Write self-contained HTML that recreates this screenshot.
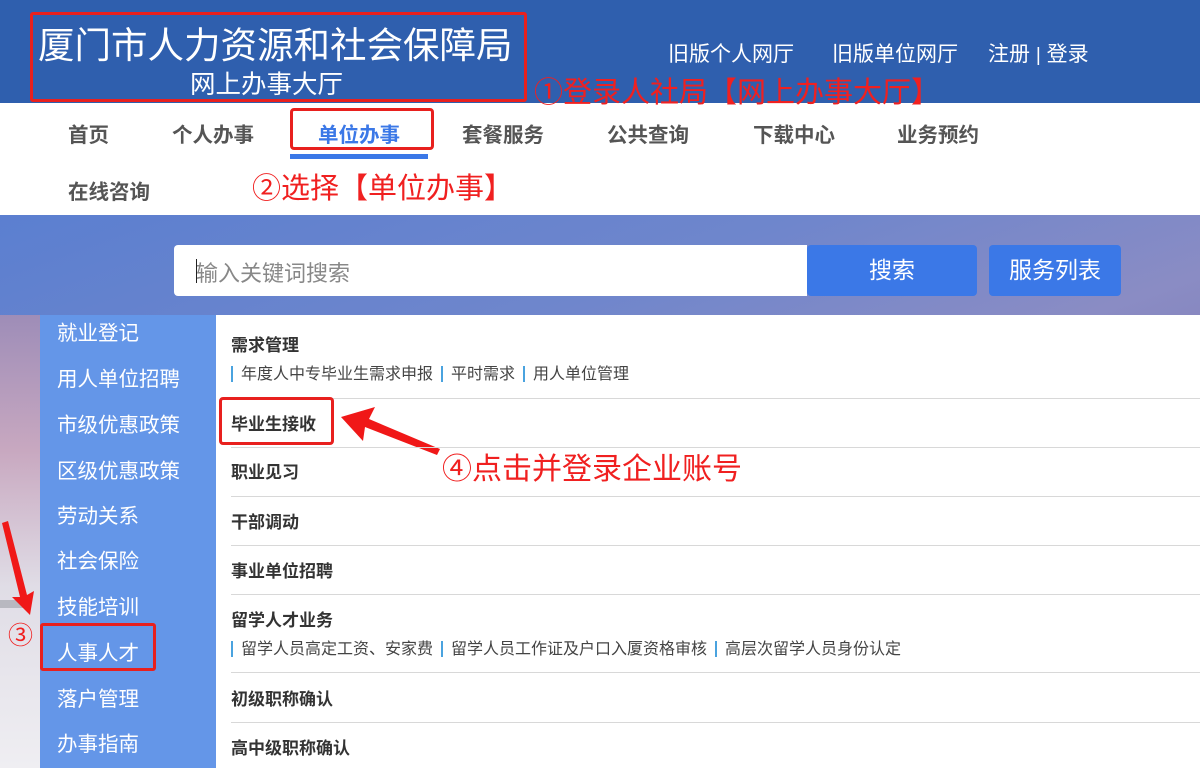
<!DOCTYPE html>
<html><head><meta charset="utf-8"><style>
*{margin:0;padding:0;box-sizing:border-box}
body{width:1200px;height:768px;overflow:hidden;position:relative;font-family:"Liberation Sans","Noto Sans CJK SC",sans-serif;background:#fff}
.a{position:absolute;white-space:nowrap}
.hdr{left:0;top:0;width:1200px;height:103px;background:#2f5fae}
.nav{font-size:20.5px;font-weight:bold;color:#555}
.side{left:40px;top:315px;width:176px;height:453px;background:#6496e8}
.si{left:57px;font-size:20.5px;color:#fff}
.t{left:231px;font-size:17px;font-weight:bold;color:#333}
.s{left:231px;font-size:16px;color:#444}
.s b{display:inline-block;width:2px;height:16px;background:#4aa3df;vertical-align:-3px;margin:0 8px 0 0}
.s i{display:inline-block;width:2px;height:16px;background:#4aa3df;vertical-align:-3px;margin:0 8px}
.ln{left:231px;width:969px;height:1px;background:#d8d8d8}
.red{color:#f02020}
</style></head><body>
<div class="a hdr"></div>
<div class="a" style="left:30px;top:12px;width:497px;height:90px;border:3px solid #e8201e;border-radius:3px"></div>
<div class="a" style="left:38px;top:16px;font-size:36.5px;color:#fff">厦门市人力资源和社会保障局</div>
<div class="a" style="left:190px;top:64px;font-size:25.5px;color:#fff">网上办事大厅</div>
<div class="a" style="left:668px;top:38px;font-size:21px;color:#fff">旧版个人网厅</div>
<div class="a" style="left:832px;top:38px;font-size:21px;color:#fff">旧版单位网厅</div>
<div class="a" style="left:988px;top:38px;font-size:21px;color:#fff">注册 <span style="font-size:19px">|</span> 登录</div>
<div class="a red" style="left:534px;top:69px;font-size:29px">①登录人社局【网上办事大厅】</div>
<div class="a nav" style="left:68px;top:118px">首页</div>
<div class="a nav" style="left:172px;top:118px">个人办事</div>
<div class="a nav" style="left:318px;top:118px;color:#3b78e7">单位办事</div>
<div class="a" style="left:290px;top:108px;width:144px;height:42px;border:3px solid #e8201e;border-radius:4px"></div>
<div class="a" style="left:290px;top:154px;width:138px;height:5px;background:#3b78e7"></div>
<div class="a nav" style="left:462px;top:118px">套餐服务</div>
<div class="a nav" style="left:607px;top:118px">公共查询</div>
<div class="a nav" style="left:753px;top:118px">下载中心</div>
<div class="a nav" style="left:897px;top:118px">业务预约</div>
<div class="a nav" style="left:68px;top:175px">在线咨询</div>
<div class="a red" style="left:252px;top:165px;font-size:29px">②选择【单位办事】</div>
<div class="a" style="left:0;top:215px;width:1200px;height:553px;background:linear-gradient(160deg,#5b7fd0 0%,#6f86cc 30%,#8a8cc4 50%,#6c5e9a 100%)"></div>
<div class="a" style="left:0;top:315px;width:40px;height:453px;background:linear-gradient(180deg,#9e8db8 0%,#c8a8c0 30%,#e0dde6 60%,#efeef2 100%)"></div>
<div class="a" style="left:0;top:600px;width:30px;height:8px;background:#b8b8c0"></div>
<div class="a" style="left:174px;top:245px;width:633px;height:51px;background:#fff;border-radius:4px 0 0 4px"></div>
<div class="a" style="left:196px;top:256px;font-size:22px;color:#888">输入关键词搜索</div>
<div class="a" style="left:196px;top:259px;width:1px;height:24px;background:#222"></div>
<div class="a" style="left:807px;top:245px;width:170px;height:51px;background:#3b78e7;border-radius:4px;color:#fff;font-size:23px;text-align:center;line-height:51px">搜索</div>
<div class="a" style="left:989px;top:245px;width:132px;height:51px;background:#3b78e7;border-radius:4px;color:#fff;font-size:23px;text-align:center;line-height:51px">服务列表</div>
<div class="a side"></div>
<div class="a" style="left:216px;top:315px;width:984px;height:453px;background:#fff"></div>
<div class="a si" style="top:316px">就业登记</div>
<div class="a si" style="top:362px">用人单位招聘</div>
<div class="a si" style="top:408px">市级优惠政策</div>
<div class="a si" style="top:454px">区级优惠政策</div>
<div class="a si" style="top:499px">劳动关系</div>
<div class="a si" style="top:544px">社会保险</div>
<div class="a si" style="top:590px">技能培训</div>
<div class="a si" style="top:636px">人事人才</div>
<div class="a si" style="top:682px">落户管理</div>
<div class="a si" style="top:727px">办事指南</div>
<div class="a" style="left:40px;top:623px;width:116px;height:48px;border:3px solid #e8201e;border-radius:3px"></div>
<div class="a red" style="left:8px;top:616px;font-size:25px">③</div>
<svg class="a" style="left:0;top:515px" width="40" height="100"><polygon points="2,8 8,6 27,80 34,76 30,100 12,82 20,82" fill="#f01818"/></svg>
<div class="a t" style="top:331px">需求管理</div>
<div class="a s" style="top:360px"><b></b>年度人中专毕业生需求申报<i></i>平时需求<i></i>用人单位管理</div>
<div class="a ln" style="top:398px"></div>
<div class="a t" style="top:410px">毕业生接收</div>
<div class="a" style="left:219px;top:397px;width:115px;height:48px;border:3px solid #e8201e;border-radius:4px"></div>
<svg class="a" style="left:335px;top:405px" width="110" height="60"><polygon points="6,12 40,2 34,14 105,44 102,50 30,22 28,36" fill="#f01818"/></svg>
<div class="a red" style="left:442px;top:444px;font-size:30px">④点击并登录企业账号</div>
<div class="a ln" style="top:447px"></div>
<div class="a t" style="top:458px">职业见习</div>
<div class="a ln" style="top:496px"></div>
<div class="a t" style="top:508px">干部调动</div>
<div class="a ln" style="top:545px"></div>
<div class="a t" style="top:557px">事业单位招聘</div>
<div class="a ln" style="top:594px"></div>
<div class="a t" style="top:606px">留学人才业务</div>
<div class="a s" style="top:635px"><b></b>留学人员高定工资、安家费<i></i>留学人员工作证及户口入厦资格审核<i></i>高层次留学人员身份认定</div>
<div class="a ln" style="top:672px"></div>
<div class="a t" style="top:685px">初级职称确认</div>
<div class="a ln" style="top:722px"></div>
<div class="a t" style="top:734px">高中级职称确认</div>
</body></html>
